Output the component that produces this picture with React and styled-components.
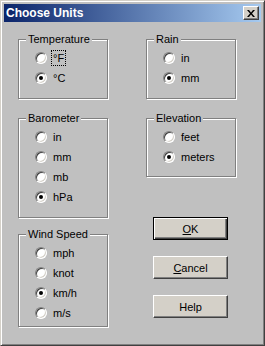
import React from "react";
import styled, { createGlobalStyle } from "styled-components";

const Global = createGlobalStyle`
  html, body { margin: 0; padding: 0; background: #c0c0c0; }
  body { font-family: "Liberation Sans", Arial, sans-serif; }
`;

const Window = styled.div`
  box-sizing: border-box;
  width: 265px;
  height: 346px;
  background: #c0c0c0;
  border: 1px solid;
  border-color: #d4d0c8 #404040 #404040 #d4d0c8;
  box-shadow: inset 1px 1px 0 #fff, inset -1px -1px 0 #808080;
  padding: 3px;
  display: flex;
  flex-direction: column;
`;

const TitleBar = styled.div`
  height: 18px;
  display: flex;
  align-items: center;
  justify-content: space-between;
  padding: 0 2px 0 2px;
  background: linear-gradient(to right, #0a246a, #a6caf0);
  color: #fff;
  font-weight: bold;
  font-size: 12px;
`;

const Close = styled.div`
  box-sizing: border-box;
  width: 16px;
  height: 14px;
  background: #d4d0c8;
  border: 1px solid;
  border-color: #fff #404040 #404040 #fff;
  box-shadow: inset -1px -1px 0 #808080;
  display: flex;
  align-items: center;
  justify-content: center;
`;

const Content = styled.div`
  display: flex;
  gap: 38px;
  padding: 17px 0 0 14px;
`;

const Column = styled.div`
  width: 90px;
  display: flex;
  flex-direction: column;
`;

const Group = styled.div`
  position: relative;
  box-sizing: border-box;
  width: 90px;
  height: ${({ h }) => h}px;
  margin-top: ${({ mt }) => mt || 0}px;
  border: 1px solid #808080;
  box-shadow: inset 1px 1px 0 #fff, 1px 1px 0 #fff;
  padding: 8px 0 0 16px;
`;

const Legend = styled.span`
  position: absolute;
  top: -8px;
  left: 7px;
  padding: 0 2px;
  background: #c0c0c0;
  font-size: 11px;
  line-height: 14px;
  color: #000;
`;

const Row = styled.label`
  display: flex;
  align-items: center;
  height: 20px;
  font-size: 11px;
  color: #000;
`;

const Radio = styled.span`
  position: relative;
  box-sizing: border-box;
  width: 12px;
  height: 12px;
  border-radius: 50%;
  background: #fff;
  border: 1px solid;
  border-color: #808080 #fff #fff #808080;
  box-shadow: inset 1px 1px 0 #404040, inset -1px -1px 0 #d4d0c8;
  margin-right: 5px;
  flex: none;
  &::after {
    content: "";
    display: ${({ on }) => (on ? "block" : "none")};
    position: absolute;
    left: 3px;
    top: 3px;
    width: 4px;
    height: 4px;
    border-radius: 50%;
    background: #000;
  }
`;

const Text = styled.span`
  padding: 0 1px;
  outline: ${({ focus }) => (focus ? "1px dotted #000" : "none")};
  line-height: 14px;
`;

const Button = styled.div`
  box-sizing: border-box;
  width: 75px;
  height: 23px;
  margin: ${({ mt }) => mt}px 0 0 7px;
  background: #d4d0c8;
  border: 1px solid;
  border-color: ${({ def }) =>
    def ? "#000" : "#fff #404040 #404040 #fff"};
  box-shadow: ${({ def }) =>
    def
      ? "inset 1px 1px 0 #fff, inset -1px -1px 0 #404040, inset -2px -2px 0 #808080"
      : "inset -1px -1px 0 #808080"};
  display: flex;
  align-items: center;
  justify-content: center;
  font-size: 11px;
  color: #000;
  u { text-decoration: underline; }
`;

const Option = ({ label, on, focus }) => (
  <Row>
    <Radio on={on} />
    <Text focus={focus}>{label}</Text>
  </Row>
);

export default function App() {
  return (
    <>
      <Global />
      <Window>
        <TitleBar>
          <span>Choose Units</span>
          <Close>
            <svg width="8" height="7" viewBox="0 0 8 7">
              <path d="M0 0h2l2 2.5L6 0h2L5 3.5 8 7H6L4 4.5 2 7H0l3-3.5z" fill="#000" />
            </svg>
          </Close>
        </TitleBar>
        <Content>
          <Column>
            <Group h={60}>
              <Legend>Temperature</Legend>
              <Option label="°F" focus />
              <Option label="°C" on />
            </Group>
            <Group h={100} mt={19}>
              <Legend>Barometer</Legend>
              <Option label="in" />
              <Option label="mm" />
              <Option label="mb" />
              <Option label="hPa" on />
            </Group>
            <Group h={93} mt={16}>
              <Legend>Wind Speed</Legend>
              <Option label="mph" />
              <Option label="knot" />
              <Option label="km/h" on />
              <Option label="m/s" />
            </Group>
          </Column>
          <Column>
            <Group h={60}>
              <Legend>Rain</Legend>
              <Option label="in" />
              <Option label="mm" on />
            </Group>
            <Group h={59} mt={19}>
              <Legend>Elevation</Legend>
              <Option label="feet" />
              <Option label="meters" on />
            </Group>
            <Button def mt={40}>
              <span><u>O</u>K</span>
            </Button>
            <Button mt={16}>
              <span><u>C</u>ancel</span>
            </Button>
            <Button mt={16}>Help</Button>
          </Column>
        </Content>
      </Window>
    </>
  );
}
